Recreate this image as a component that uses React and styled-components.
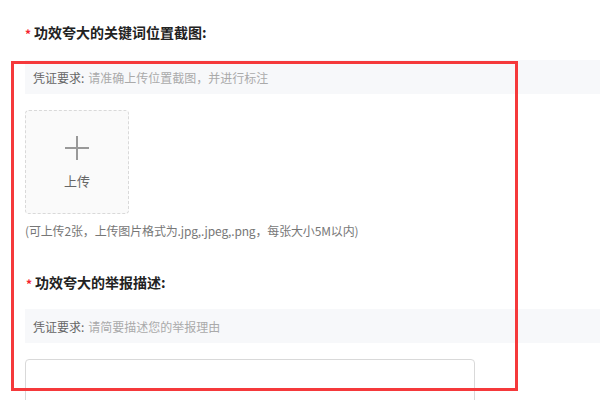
import React from "react";
import styled, { createGlobalStyle } from "styled-components";

const Global = createGlobalStyle`
  html, body { margin: 0; padding: 0; background: #fff; }
  body { font-family: "Microsoft YaHei", "Noto Sans CJK SC", "Noto Sans", sans-serif; }
  * { box-sizing: border-box; }
`;

const Page = styled.div`
  position: relative;
  width: 600px;
  height: 400px;
  overflow: hidden;
  padding: 22px 0 0 25px;
`;

const Section = styled.section`
  display: flex;
  flex-direction: column;
  margin-bottom: ${(p) => p.$gap || 0}px;
`;

const Label = styled.div`
  display: flex;
  align-items: center;
  height: 20px;
  font-size: 14px;
  font-weight: bold;
  color: #222;
  margin-bottom: ${(p) => p.$mb}px;
`;

const Star = styled.span`
  color: #f5222d;
  font-size: 12px;
  font-weight: bold;
  margin-right: 3px;
  margin-left: ${(p) => p.$ml || 0}px;
  position: relative;
  top: 1px;
`;

const Requirement = styled.div`
  height: 34px;
  display: flex;
  align-items: center;
  padding-left: 8px;
  background: #f7f8fa;
  font-size: 12px;
  color: #666;
  white-space: nowrap;
`;

const ReqValue = styled.span`
  color: #aaa;
  margin-left: 4px;
`;

const UploadBox = styled.div`
  width: 104px;
  height: 104px;
  margin-top: 16px;
  border: 1px dashed #d9d9d9;
  border-radius: 4px;
  background: #fafafa;
  display: flex;
  flex-direction: column;
  align-items: center;
  padding-top: 25px;
  color: #666;
  font-size: 13px;
`;

const UploadText = styled.div`
  margin-top: 12px;
  line-height: 18px;
`;

const Hint = styled.div`
  margin-top: 8px;
  font-size: 12px;
  line-height: 18px;
  color: #777;
  white-space: nowrap;
  letter-spacing: -0.15px;
`;

const TextArea = styled.div`
  margin-top: 16px;
  width: 450px;
  height: 100px;
  border: 1px solid #d9d9d9;
  border-radius: 4px;
  background: #fff;
`;

const Highlight = styled.div`
  position: absolute;
  left: 11px;
  top: 61px;
  width: 507px;
  height: 330px;
  border: 3px solid #f5393b;
  pointer-events: none;
`;

export default function App() {
  return (
    <>
      <Global />
      <Page>
        <Section $gap={32}>
          <Label $mb={18}>
            <Star>*</Star>功效夸大的关键词位置截图:
          </Label>
          <Requirement>
            凭证要求:<ReqValue>请准确上传位置截图，并进行标注</ReqValue>
          </Requirement>
          <UploadBox>
            <svg width="24" height="24" viewBox="0 0 24 24">
              <path d="M12 0v24M0 12h24" stroke="#999" strokeWidth="2" fill="none" />
            </svg>
            <UploadText>上传</UploadText>
          </UploadBox>
          <Hint>(可上传2张，上传图片格式为.jpg,.jpeg,.png，每张大小5M以内)</Hint>
        </Section>
        <Section>
          <Label $mb={17}>
            <Star $ml={1}>*</Star>功效夸大的举报描述:
          </Label>
          <Requirement>
            凭证要求:<ReqValue>请简要描述您的举报理由</ReqValue>
          </Requirement>
          <TextArea />
        </Section>
        <Highlight />
      </Page>
    </>
  );
}
